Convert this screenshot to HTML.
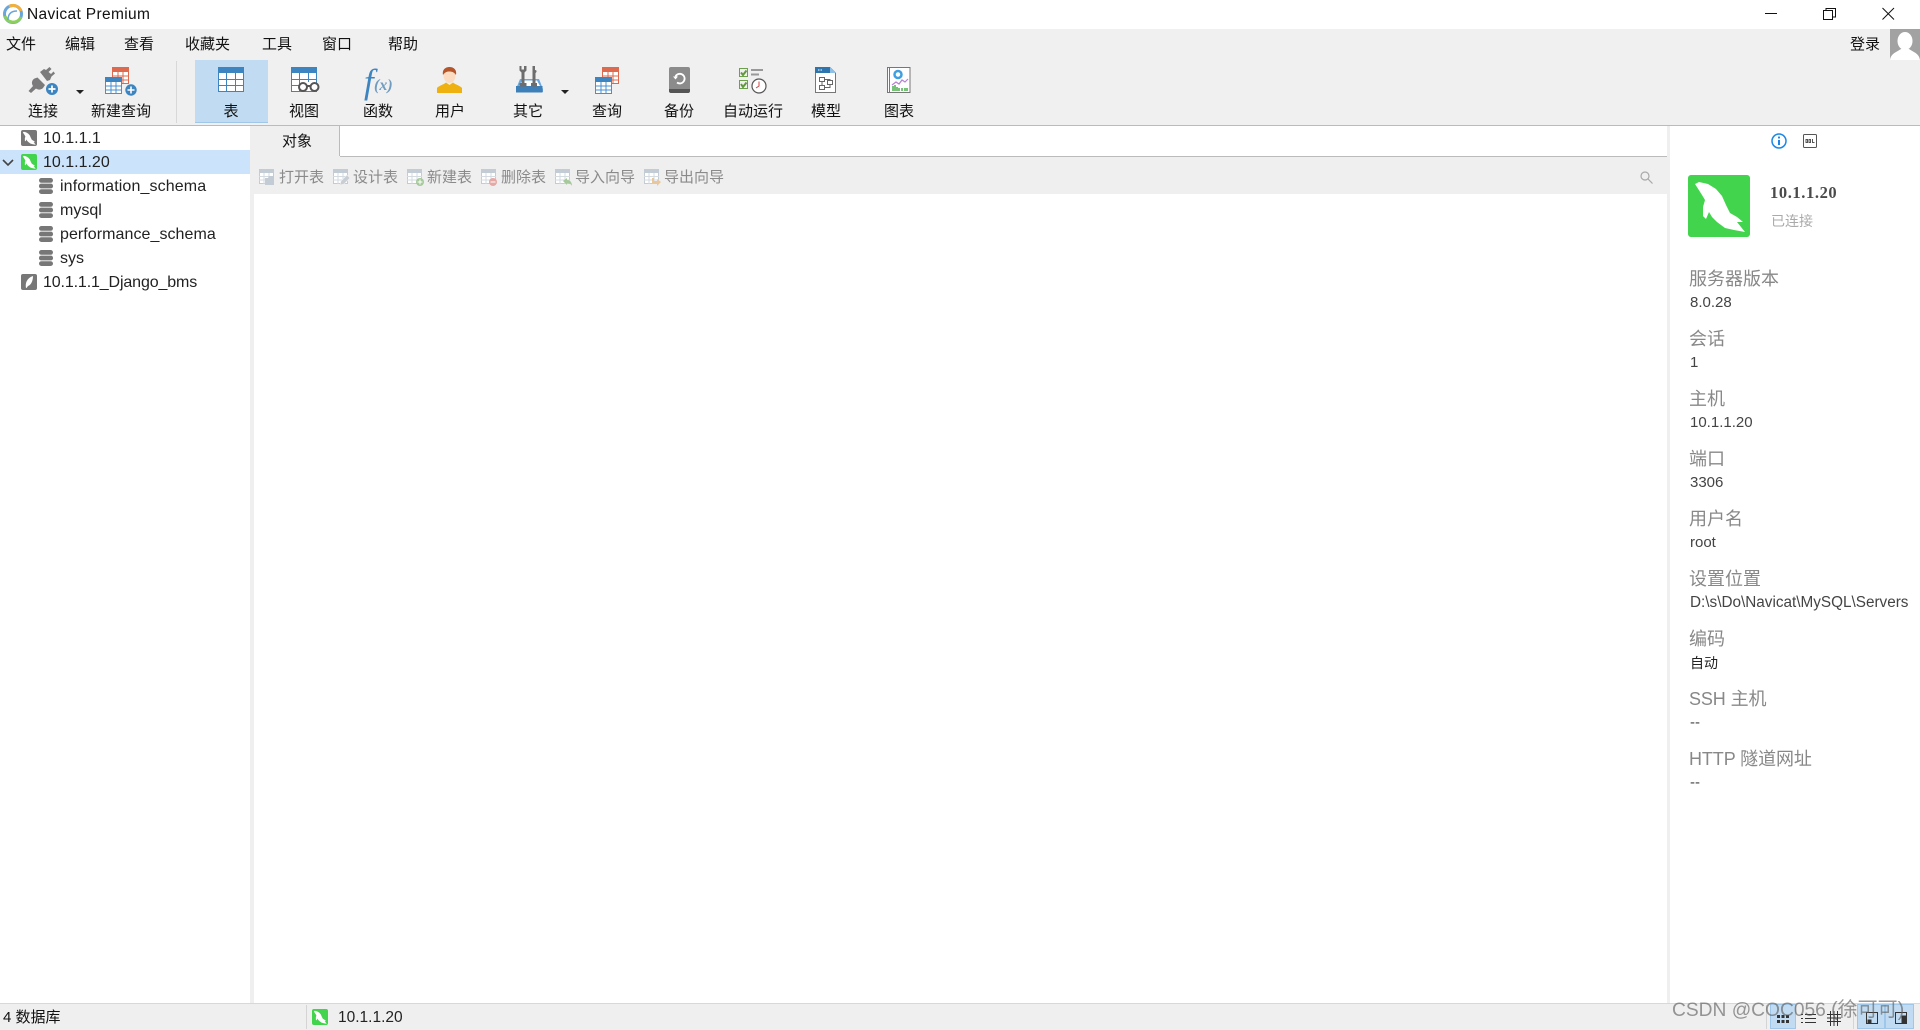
<!DOCTYPE html>
<html lang="zh">
<head>
<meta charset="utf-8">
<title>Navicat Premium</title>
<style>
html,body{margin:0;padding:0;width:1920px;height:1030px;overflow:hidden;background:#fff}
body{position:relative;font-family:"Liberation Sans","Noto Sans CJK SC",sans-serif;color:#111;font-size:15px}
.b{position:absolute}
.t{position:absolute;white-space:nowrap;line-height:20px;height:20px}
.c{transform:translateX(-50%)}
svg{position:absolute;overflow:visible}
.m{font-size:15px;top:35px}
.l{font-size:15px;top:102px}
.a{font-size:15px;top:168px;color:#8a8a8a}
.tr{font-size:16px;color:#222}
.k{font-size:18px;color:#888;left:1689px}
.v{font-size:15px;color:#444;left:1690px}
</style>
</head>
<body>
<svg width="0" height="0" style="position:absolute">
<defs>
<symbol id="dol" viewBox="0 0 62 62"><path d="M7 9 L11 7 L20 9 L28 14 L34 21 L38 30 L42 38 L49 42 L55 47 L49 47 L57 57 L46 55 L37 53 L29 47 L24 42 L21 37 L18 44 L15 41 L15 32 L17 25 L14 20 Z" fill="#fff"/></symbol>
<symbol id="tb" viewBox="0 0 26 25"><rect x=".5" y=".5" width="25" height="24" fill="#fff" stroke="#3d85c0"/><rect x="0" y="0" width="26" height="6" fill="#3d85c0"/><path d="M0 12.5H26M0 18.5H26M8.500 6V25M17.500 6V25" stroke="#3d85c0" stroke-width="1"/></symbol>
<symbol id="tr" viewBox="0 0 17 17"><rect x=".5" y=".5" width="16" height="16" fill="#fff" stroke="#dd6a4e"/><rect width="17" height="5" fill="#dd6a4e"/><path d="M0 9H17M0 13H17M6 5V17M11 5V17" stroke="#dd6a4e"/></symbol>
<symbol id="tbb" viewBox="0 0 17 17"><rect x=".5" y=".5" width="16" height="16" fill="#fff" stroke="#4a90d0"/><rect width="17" height="5" fill="#3d85c0"/><path d="M0 9H17M0 13H17M6 5V17M11 5V17" stroke="#4a90d0"/></symbol>
<symbol id="db" viewBox="0 0 14 16"><g fill="#777"><rect x="0" y="0" width="14" height="4.800" rx="2.400"/><rect x="0" y="5.600" width="14" height="4.800" rx="2.200"/><rect x="0" y="11.200" width="14" height="4.800" rx="2.400"/></g></symbol>
<symbol id="at" viewBox="0 0 15 15"><rect x=".5" y=".5" width="14" height="14" fill="#fff" stroke="#c3ccd5"/><rect width="15" height="4" fill="#c3ccd5"/><path d="M0 7.500H15M0 11H15M5 4V15M10 4V15" stroke="#d3dae0"/></symbol>
</defs>
</svg>

<!-- title bar -->
<svg style="left:2px;top:3px" width="22" height="22" viewBox="0 0 22 22"><circle cx="11" cy="11" r="8.500" fill="#fff" stroke="#6aa5dc" stroke-width="3"/><path d="M3 13A8.500 8.500 0 0 0 19 14" fill="none" stroke="#8ccf5c" stroke-width="3"/><path d="M7 3.500A8.500 8.500 0 0 1 19 8" fill="none" stroke="#f0b040" stroke-width="3"/><path d="M6 17C6 11 9 8 15 8" fill="none" stroke="#6aa5dc" stroke-width="1.500"/></svg>
<div class="t" style="left:27px;top:5px;font-size:15.500px;letter-spacing:.35px">Navicat Premium</div>
<svg style="left:1765px;top:8px" width="130" height="12" viewBox="0 0 130 12" fill="none" stroke="#111" stroke-width="1"><path d="M0 5.500H12"/><rect x="58.500" y="2.500" width="9" height="9"/><path d="M61 2.500V.5H70.500V9H67.500"/><path d="M117.500 0 L129 11.500M129 0 L117.500 11.500"/></svg>

<!-- menu + toolbar bg -->
<div class="b" style="left:0;top:29px;width:1920px;height:96px;background:#f0f0f0"></div>
<div class="b" style="left:0;top:125px;width:1920px;height:1px;background:#bbb"></div>
<div class="t m" style="left:6px">文件</div>
<div class="t m" style="left:65px">编辑</div>
<div class="t m" style="left:124px">查看</div>
<div class="t m" style="left:185px">收藏夹</div>
<div class="t m" style="left:262px">工具</div>
<div class="t m" style="left:322px">窗口</div>
<div class="t m" style="left:388px">帮助</div>
<div class="t m" style="left:1850px">登录</div>
<div class="b" style="left:1890px;top:29px;width:30px;height:31px;background:#a2a2a2;overflow:hidden"><svg style="left:0;top:0" width="30" height="31" viewBox="0 0 30 31"><ellipse cx="15" cy="12" rx="7.500" ry="9" fill="#fff"/><path d="M0 31C1 24 7 23 11 20H19C23 23 29 24 30 31Z" fill="#fff"/></svg></div>

<!-- toolbar -->
<div class="b" style="left:176px;top:61px;width:1px;height:62px;background:#d8d8d8"></div>
<div class="b" style="left:195px;top:60px;width:73px;height:63px;background:#c1dcf2;border-bottom:1px solid #9fc7ea;box-sizing:border-box"></div>

<!-- connect -->
<svg style="left:27px;top:66px" width="32" height="31" viewBox="0 0 32 31"><g fill="#7b7b7b"><path d="M13 6 L17 3 L19 4 L22.500 1 L24.500 3 L21.500 6 L24 8 L26.500 5.500 L28 7.500 L24.500 10.500 L23 14 L20 15 Z"/><path d="M10.500 11.500 L18 19 L16 22 C14 24 11 24 9 22.500 L4 27 L1.500 25 L6 20 C4 17 5 14 7.500 12.500 Z"/></g><circle cx="25" cy="23" r="6" fill="#3d85c0"/><path d="M21.500 23H28.500M25 19.500V26.500" stroke="#fff" stroke-width="1.700"/></svg>
<div class="t l c" style="left:43px">连接</div>
<svg style="left:76px;top:90px" width="8" height="4"><path d="M0 0H8L4 4Z" fill="#222"/></svg>

<!-- new query -->
<svg style="left:112px;top:67px;width:17px;height:17px"><use href="#tr"/></svg>
<svg style="left:105px;top:77px;width:17px;height:17px"><use href="#tbb"/></svg>
<svg style="left:125px;top:84px" width="12" height="12" viewBox="0 0 12 12"><circle cx="6" cy="6" r="5.700" fill="#3d85c0"/><path d="M2.500 6H9.500M6 2.500V9.500" stroke="#fff" stroke-width="1.600"/></svg>
<div class="t l c" style="left:121px">新建查询</div>

<!-- table -->
<svg style="left:218px;top:67px;width:26px;height:25px"><use href="#tb"/></svg>
<div class="t l c" style="left:231px">表</div>

<!-- view -->
<svg style="left:291px;top:67px" width="29" height="26" viewBox="0 0 29 26"><rect x=".5" y=".5" width="25" height="24" fill="#fff" stroke="#3d85c0"/><rect width="26" height="6" fill="#3d85c0"/><path d="M0 12.500H26M0 18.500H10M8.500 6V25M17.500 6V15" stroke="#3d85c0"/><circle cx="12" cy="20" r="4" fill="#fff" stroke="#555" stroke-width="2"/><circle cx="23.500" cy="20" r="4" fill="#fff" stroke="#555" stroke-width="2"/><path d="M16 19H19.500" stroke="#555" stroke-width="2"/></svg>
<div class="t l c" style="left:304px">视图</div>

<!-- function -->
<div class="t" style="left:364px;top:64px;font-family:'Liberation Serif',serif;font-style:italic;color:#3d85c0;font-size:35px;line-height:35px;height:35px">f</div>
<div class="t" style="left:374px;top:76px;font-family:'Liberation Serif',serif;font-style:italic;font-weight:bold;color:#6f9cc0;font-size:16px">(x)</div>
<div class="t l c" style="left:378px">函数</div>

<!-- user -->
<svg style="left:437px;top:67px" width="25" height="26" viewBox="0 0 25 26"><ellipse cx="12.500" cy="8.500" rx="6" ry="7.500" fill="#fbdcc0"/><path d="M6 8C5 2 9 0 12.500 0C17 0 20 3 19 8C17 5 15 4.500 12 4.500C10 4.500 8 5 6 8Z" fill="#b5552a"/><path d="M0 26V21C2 18.500 6 18 9 15.500L12.500 18L16 15.500C19 18 23 18.500 25 21V26Z" fill="#eeb110"/></svg>
<div class="t l c" style="left:450px">用户</div>

<!-- other -->
<svg style="left:516px;top:66px" width="27" height="27" viewBox="0 0 27 27"><path d="M0 26V23L4 13H23L27 23V26Z" fill="#6aa8de"/><path d="M3 20L6 14.500H21L24 20Z" fill="#fff"/><rect y="20" width="26.500" height="6.500" fill="#3d7fb8"/><path d="M6 0V3.500H8.500V0H11V4.500L9 6.500V17H11V20.500H4V17H6V6.500L4 4.500V0Z" fill="#6d6d6d" transform="translate(-.5 0)"/><path d="M16.500 0H19V4C21 4 21 6 19.500 7V17H21V20.500H15V17H16.500Z" fill="#6d6d6d"/></svg>
<div class="t l c" style="left:528px">其它</div>
<svg style="left:561px;top:90px" width="8" height="4"><path d="M0 0H8L4 4Z" fill="#222"/></svg>

<!-- query -->
<svg style="left:602px;top:67px;width:17px;height:17px"><use href="#tr"/></svg>
<svg style="left:595px;top:77px;width:17px;height:17px"><use href="#tbb"/></svg>
<div class="t l c" style="left:607px">查询</div>

<!-- backup -->
<svg style="left:669px;top:67px" width="21" height="26" viewBox="0 0 21 26"><rect width="21" height="26" rx="2" fill="#8b8b8b"/><path d="M0 22H21V24C21 25.100 20 26 19 26H2C1 26 0 25.100 0 24Z" fill="#555"/><path d="M6.500 9.500A4.800 4.800 0 1 1 8 15.500" fill="none" stroke="#fff" stroke-width="1.800"/><path d="M4 9.500H9L6.500 12.500Z" fill="#fff"/></svg>
<div class="t l c" style="left:679px">备份</div>

<!-- auto run -->
<svg style="left:739px;top:67px" width="28" height="27" viewBox="0 0 28 27"><g fill="none" stroke="#6ca04a"><rect x=".5" y="1.500" width="8" height="8"/><rect x=".5" y="13.500" width="8" height="8"/></g><path d="M2 5.500L4 8L7.500 3.500M2 17L4 20L7.500 15.500" fill="none" stroke="#5f9a3c" stroke-width="2"/><path d="M12 3H24M12 7.500H20" stroke="#999" stroke-width="2"/><circle cx="20" cy="19" r="7" fill="#fff" stroke="#555" stroke-width="1.200"/><path d="M20 14.500V19L17 21" fill="none" stroke="#c44" stroke-width="1"/></svg>
<div class="t l c" style="left:753px">自动运行</div>

<!-- model -->
<svg style="left:815px;top:67px" width="21" height="26" viewBox="0 0 21 26"><path d="M.5 .5H15L20.500 6V25.500H.5Z" fill="#fff" stroke="#777"/><path d="M0 0H15L16 6H0Z" fill="#2f75ad"/><path d="M15 0L21 6H15Z" fill="#8ec0e8"/><g fill="none" stroke="#666"><rect x="4.500" y="10.500" width="5" height="4"/><rect x="4.500" y="18.500" width="5" height="4"/><rect x="12.500" y="13.500" width="5" height="4"/><path d="M7 14.500V18.500M9.500 12.500H15V13.500M9.500 20.500H15V17.500"/></g><path d="M3 3H8" stroke="#fff" stroke-dasharray="1.500 1"/></svg>
<div class="t l c" style="left:826px">模型</div>

<!-- chart -->
<svg style="left:887px;top:67px" width="24" height="26" viewBox="0 0 24 26"><rect x=".5" y=".5" width="22.500" height="25" fill="#fff" stroke="#777"/><path d="M2.500 0V26" stroke="#777"/><circle cx="11" cy="7.500" r="3.500" fill="none" stroke="#3f9fe0" stroke-width="2.500"/><path d="M5 18L9 15L12 17L15 13L18 15L21 12" fill="none" stroke="#b77fd4" stroke-width="1.200"/><path d="M6 24V19M8 24V18M10 24V20M12 24V21M15 24V21M18 24V21M20 24V21" stroke="#4cae4c" stroke-width="1.500"/></svg>
<div class="t l c" style="left:899px">图表</div>

<!-- left tree -->
<div class="b" style="left:0;top:150px;width:250px;height:24px;background:#cce4fb"></div>
<div class="b" style="left:250px;top:126px;width:4px;height:877px;background:#efefef"></div>

<div class="b" style="left:21px;top:130px;width:16px;height:16px;background:#777;border-radius:2px"><svg style="left:0;top:0;width:16px;height:16px"><use href="#dol"/></svg></div>
<div class="t tr" style="left:43px;top:129px">10.1.1.1</div>

<svg style="left:2px;top:159px" width="12" height="7" viewBox="0 0 12 7"><path d="M1 1L6 6L11 1" fill="none" stroke="#444" stroke-width="1.600"/></svg>
<div class="b" style="left:21px;top:154px;width:16px;height:16px;background:#42d44c;border-radius:2px"><svg style="left:0;top:0;width:16px;height:16px"><use href="#dol"/></svg></div>
<div class="t tr" style="left:43px;top:153px">10.1.1.20</div>

<svg style="left:39px;top:178px;width:14px;height:16px"><use href="#db"/></svg>
<div class="t tr" style="left:60px;top:177px;letter-spacing:.12px">information_schema</div>
<svg style="left:39px;top:202px;width:14px;height:16px"><use href="#db"/></svg>
<div class="t tr" style="left:60px;top:201px">mysql</div>
<svg style="left:39px;top:226px;width:14px;height:16px"><use href="#db"/></svg>
<div class="t tr" style="left:60px;top:225px;letter-spacing:.06px">performance_schema</div>
<svg style="left:39px;top:250px;width:14px;height:16px"><use href="#db"/></svg>
<div class="t tr" style="left:60px;top:249px">sys</div>

<svg style="left:21px;top:274px" width="16" height="16" viewBox="0 0 16 16"><rect width="16" height="16" rx="2" fill="#777"/><path d="M5 14C4 9 6 4 12 2C12 7 10 11 7 12L5.500 14" fill="#fff"/></svg>
<div class="t tr" style="left:43px;top:273px;letter-spacing:-.13px">10.1.1.1_Django_bms</div>

<!-- main area -->
<div class="b" style="left:254px;top:126px;width:86px;height:31px;background:#efefef;border-right:1px solid #bbb;box-sizing:border-box"></div>
<div class="b" style="left:254px;top:156px;width:1413px;height:38px;background:#efefef"></div>
<div class="b" style="left:340px;top:156px;width:1327px;height:1px;background:#bbb"></div>
<div class="t c" style="left:297px;top:132px;font-size:15px">对象</div>

<svg style="left:259px;top:169px;width:15px;height:15px"><use href="#at"/></svg>
<svg style="left:265px;top:176px" width="10" height="9"><path d="M0 2H3L4 0H9V9H0Z" fill="#c3ccd5"/></svg>
<div class="t a" style="left:279px">打开表</div>
<svg style="left:333px;top:169px;width:15px;height:15px"><use href="#at"/></svg>
<svg style="left:340px;top:175px" width="10" height="10"><path d="M0 10L1 6L7 0L10 3L4 9Z" fill="#c8ced4" stroke="#efefef" stroke-width=".6"/></svg>
<div class="t a" style="left:353px">设计表</div>
<svg style="left:407px;top:169px;width:15px;height:15px"><use href="#at"/></svg>
<svg style="left:416px;top:178px" width="8" height="8"><circle cx="4" cy="4" r="4" fill="#a5c99a"/><path d="M1.500 4H6.500M4 1.500V6.500" stroke="#fff"/></svg>
<div class="t a" style="left:427px">新建表</div>
<svg style="left:481px;top:169px;width:15px;height:15px"><use href="#at"/></svg>
<svg style="left:489px;top:178px" width="8" height="8"><circle cx="4" cy="4" r="4" fill="#e5a8a4"/><path d="M1.500 4H6.500" stroke="#fff"/></svg>
<div class="t a" style="left:501px">删除表</div>
<svg style="left:555px;top:169px;width:15px;height:15px"><use href="#at"/></svg>
<svg style="left:563px;top:178px" width="9" height="8"><path d="M0 3L4 0V2C7 2 9 4 9 8C8 6 6 5 4 5V7Z" fill="#a5c99a"/></svg>
<div class="t a" style="left:575px">导入向导</div>
<svg style="left:644px;top:169px;width:15px;height:15px"><use href="#at"/></svg>
<svg style="left:652px;top:178px" width="9" height="8"><path d="M0 0H2V3H5V1L9 4L5 8V6H0Z" fill="#e8c89a"/></svg>
<div class="t a" style="left:664px">导出向导</div>
<svg style="left:1640px;top:171px" width="13" height="13" viewBox="0 0 13 13" fill="none" stroke="#a8a8a8" stroke-width="1.200"><circle cx="5" cy="5" r="4"/><path d="M8 8L12.500 12.500"/></svg>

<!-- right panel -->
<div class="b" style="left:1667px;top:126px;width:3px;height:877px;background:#efefef"></div>
<svg style="left:1771px;top:133px" width="16" height="16" viewBox="0 0 16 16"><circle cx="8" cy="8" r="7" fill="#fff" stroke="#1a86e8" stroke-width="1.500"/><path d="M8 7V12" stroke="#1a86e8" stroke-width="2"/><circle cx="8" cy="4.500" r="1.100" fill="#1a86e8"/></svg>
<svg style="left:1803px;top:134px" width="14" height="14" viewBox="0 0 14 14"><rect x=".5" y=".5" width="13" height="13" rx="1" fill="#fff" stroke="#555"/><path d="M3 5.500V8.500H4.500V5.500ZM6 5.500V8.500H7.500V5.500ZM9.500 5V8.500H11.500" fill="none" stroke="#555"/></svg>
<div class="b" style="left:1688px;top:175px;width:62px;height:62px;background:#42d44c;border-radius:3px"><svg style="left:0;top:0;width:62px;height:62px"><use href="#dol"/></svg></div>
<div class="t" style="left:1770px;top:183px;font-family:'Liberation Serif',serif;font-weight:bold;font-size:16.500px;color:#4a4a4a;letter-spacing:.6px">10.1.1.20</div>
<div class="t" style="left:1771px;top:211px;font-size:14px;color:#aaa">已连接</div>

<div class="t k" style="top:269px">服务器版本</div><div class="t v" style="top:293px">8.0.28</div>
<div class="t k" style="top:329px">会话</div><div class="t v" style="top:353px">1</div>
<div class="t k" style="top:389px">主机</div><div class="t v" style="top:413px">10.1.1.20</div>
<div class="t k" style="top:449px">端口</div><div class="t v" style="top:473px">3306</div>
<div class="t k" style="top:509px">用户名</div><div class="t v" style="top:533px">root</div>
<div class="t k" style="top:569px">设置位置</div><div class="t v" style="top:593px;width:220px;overflow:hidden;font-size:15.300px">D:\s\Do\Navicat\MySQL\Servers</div>
<div class="t k" style="top:629px">编码</div><div class="t v" style="top:653px;color:#222;font-size:14px">自动</div>
<div class="t k" style="top:689px;letter-spacing:-.1px">SSH 主机</div><div class="t v" style="top:713px">--</div>
<div class="t k" style="top:749px;letter-spacing:-.1px">HTTP 隧道网址</div><div class="t v" style="top:773px">--</div>

<!-- status bar -->
<div class="b" style="left:0;top:1003px;width:1920px;height:27px;background:#efefef;border-top:1px solid #d8d8d8;box-sizing:border-box"></div>
<div class="t" style="left:3px;top:1008px;font-size:15px">4 数据库</div>
<div class="b" style="left:306px;top:1005px;width:1px;height:24px;background:#d4d4d4"></div>
<div class="b" style="left:312px;top:1009px;width:16px;height:16px;background:#42d44c;border-radius:2px"><svg style="left:0;top:0;width:16px;height:16px"><use href="#dol"/></svg></div>
<div class="t" style="left:338px;top:1008px;font-size:15.500px;color:#222">10.1.1.20</div>

<div class="b" style="left:1766px;top:1005px;width:1px;height:24px;background:#d4d4d4"></div>
<div class="b" style="left:1853px;top:1005px;width:1px;height:24px;background:#d4d4d4"></div>
<div class="b" style="left:1770px;top:1004px;width:26px;height:25px;background:#c1dcf2;border:1px solid #9fc7ea;box-sizing:border-box"></div>
<svg style="left:1776px;top:1012px" width="14" height="14" viewBox="0 0 14 14" fill="#333"><path d="M1 3h3v3H1zM5.500 3h3v3h-3zM10 3h3v3h-3zM1 8h3v3H1zM5.500 8h3v3h-3zM10 8h3v3h-3z"/></svg>
<svg style="left:1801px;top:1012px" width="15" height="14" viewBox="0 0 15 14" stroke="#333" fill="none"><path d="M0 2.500H2M4 2.500H15M0 6.500H2M4 6.500H15M0 10.500H2M4 10.500H15"/></svg>
<svg style="left:1827px;top:1011px" width="14" height="15" viewBox="0 0 14 15" stroke="#333" fill="none"><path d="M0 3.500H14M0 7H14M0 10.500H14M3.500 0V15M7 0V15M10.500 0V15"/></svg>
<div class="b" style="left:1857px;top:1004px;width:28px;height:25px;background:#c1dcf2;border:1px solid #9fc7ea;box-sizing:border-box"></div>
<div class="b" style="left:1885px;top:1004px;width:29px;height:25px;background:#c1dcf2;border:1px solid #9fc7ea;box-sizing:border-box"></div>
<svg style="left:1866px;top:1012px" width="12" height="12" viewBox="0 0 12 12" fill="none" stroke="#333"><rect x=".5" y=".5" width="11" height="11"/><path d="M2 8H5V11H2Z" fill="#333"/></svg>
<svg style="left:1895px;top:1012px" width="12" height="12" viewBox="0 0 12 12" fill="none" stroke="#333"><rect x=".5" y=".5" width="11" height="11"/><path d="M7 4H11V11H7Z" fill="#333"/></svg>
<div class="t" style="left:1672px;top:1000px;font-size:19.200px;line-height:22px;height:22px;color:rgba(90,90,90,.62)">CSDN @COC056</div>
<div class="t" style="left:1831px;top:999px;font-size:20px;line-height:22px;height:22px;color:rgba(90,90,90,.62)">(徐可可)</div>
</body>
</html>
